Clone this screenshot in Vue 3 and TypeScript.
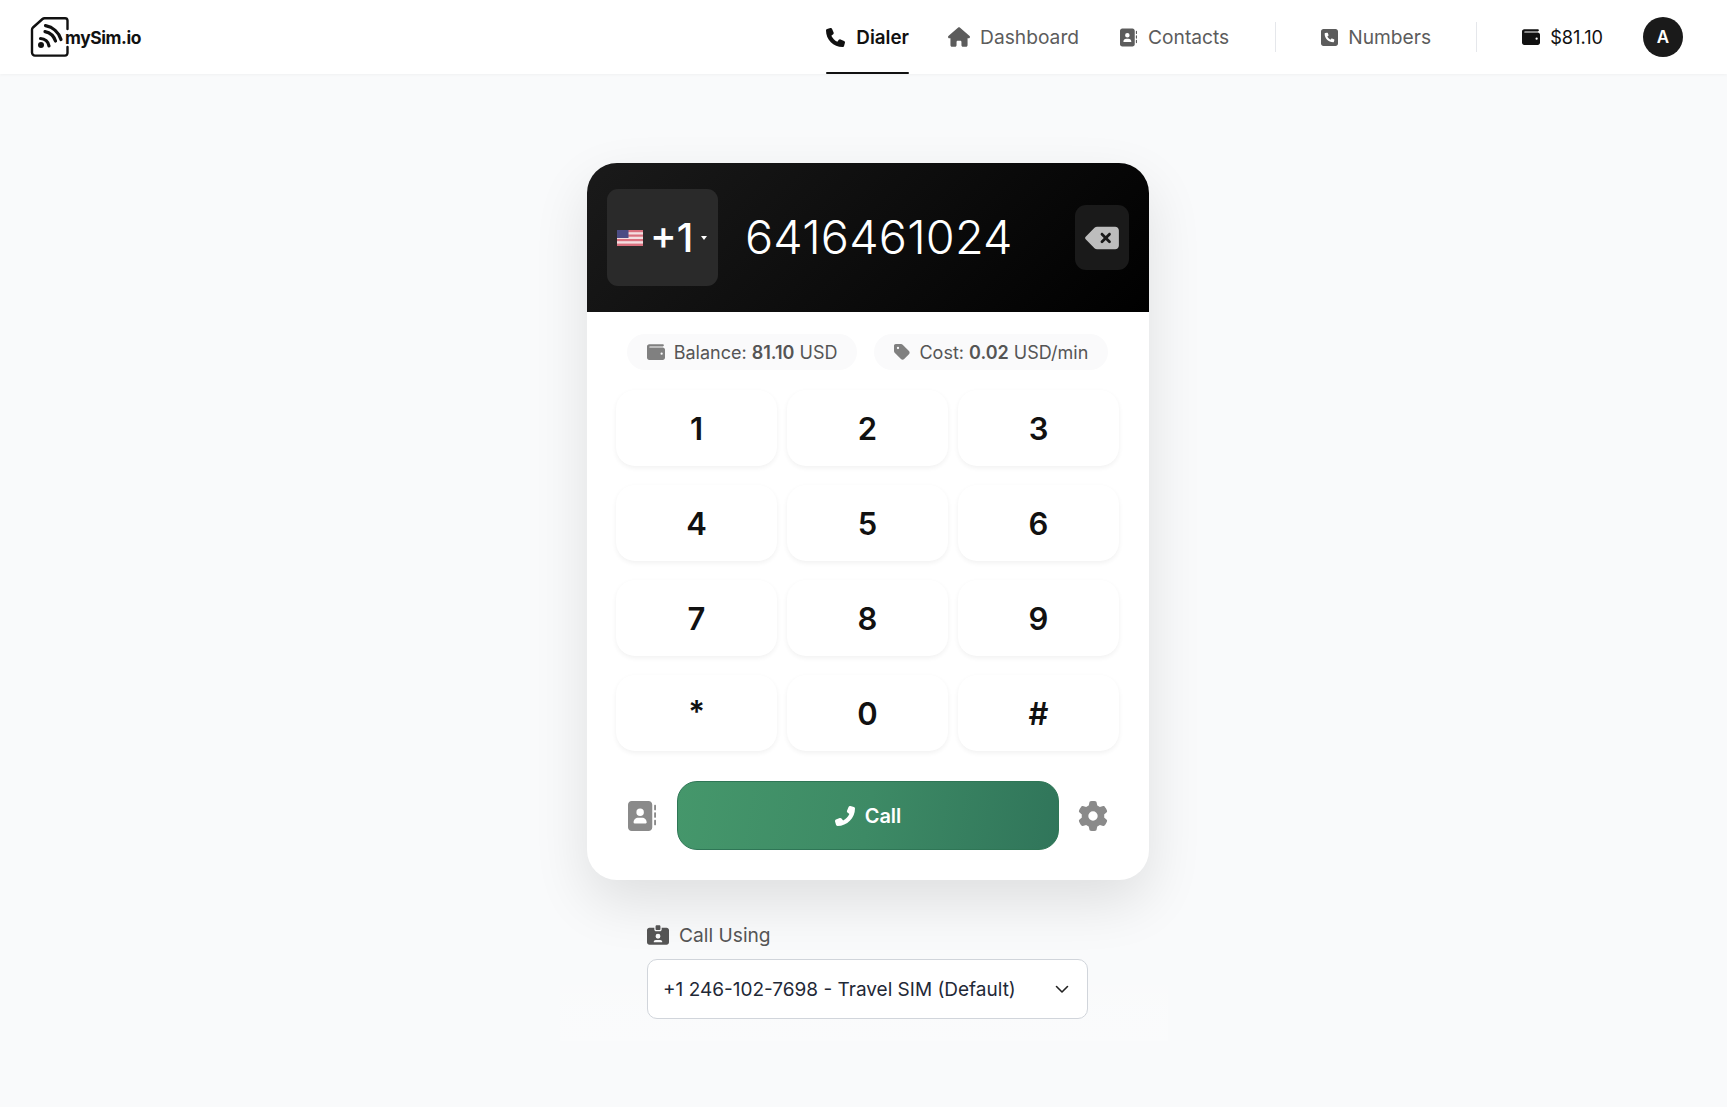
<script setup lang="ts">
const keys = ['1', '2', '3', '4', '5', '6', '7', '8', '9', '*', '0', '#']

const icons = {
  phone:
    'M164.9 24.6c-7.7-18.6-28-28.5-47.4-23.2l-88 24C12.1 30.2 0 46 0 64C0 311.4 200.6 512 448 512c18 0 33.8-12.1 38.6-29.5l24-88c5.3-19.4-4.6-39.7-23.2-47.4l-96-40c-16.3-6.8-35.2-2.1-46.3 11.6L304.7 368C234.3 334.7 177.3 277.7 144 207.3L193.3 167c13.7-11.2 18.4-30 11.6-46.3l-40-96z',
  house:
    'M575.8 255.5c0 18-15 32.1-32 32.1h-32l.7 160.2c0 2.7-.2 5.4-.5 8.1V472c0 22.1-17.9 40-40 40H456c-1.1 0-2.2 0-3.3-.1c-1.4 .1-2.8 .1-4.2 .1H416 392c-22.1 0-40-17.9-40-40V448 384c0-17.7-14.3-32-32-32H256c-17.7 0-32 14.3-32 32v64 24c0 22.1-17.9 40-40 40H160 128.1c-1.5 0-3-.1-4.5-.2c-1.2 .1-2.4 .2-3.6 .2H104c-22.1 0-40-17.9-40-40V360c0-.9 0-1.9 .1-2.8V287.6H32c-18 0-32-14-32-32.1c0-9 3-17 10-24L266.4 8c7-7 15-8 22-8s15 2 21 7L564.8 231.5c8 7 12 15 11 24z',
  book:
    'M96 0C60.7 0 32 28.7 32 64V448c0 35.3 28.7 64 64 64H384c35.3 0 64-28.7 64-64V64c0-35.3-28.7-64-64-64H96zM208 288h64c44.2 0 80 35.8 80 80c0 8.8-7.2 16-16 16H144c-8.8 0-16-7.2-16-16c0-44.2 35.8-80 80-80zm-32-96a64 64 0 1 1 128 0 64 64 0 1 1 -128 0zM512 80c0-8.8-7.2-16-16-16s-16 7.2-16 16v64c0 8.8 7.2 16 16 16s16-7.2 16-16V80zM496 192c-8.8 0-16 7.2-16 16v64c0 8.8 7.2 16 16 16s16-7.2 16-16V208c0-8.8-7.2-16-16-16zm16 144c0-8.8-7.2-16-16-16s-16 7.2-16 16v64c0 8.8 7.2 16 16 16s16-7.2 16-16V336z',
  squarePhone:
    'M64 32C28.7 32 0 60.7 0 96V416c0 35.3 28.7 64 64 64H384c35.3 0 64-28.7 64-64V96c0-35.3-28.7-64-64-64H64zm90.7 96.7c9.7-2.6 19.9 2.3 23.7 11.6l20 48c3.4 8.2 1 17.6-5.8 23.2L168 231.7c16.6 35.2 45.1 63.7 80.3 80.3l20.2-24.7c5.6-6.8 15-9.2 23.2-5.8l48 20c9.3 3.9 14.2 14 11.6 23.7l-12 44C336.9 378 329 384 320 384C196.3 384 96 283.7 96 160c0-9 6-16.9 14.7-19.3l44-12z',
  wallet:
    'M64 32C28.7 32 0 60.7 0 96V416c0 35.3 28.7 64 64 64H448c35.3 0 64-28.7 64-64V192c0-35.3-28.7-64-64-64H80c-8.8 0-16-7.2-16-16s7.2-16 16-16H448c17.7 0 32-14.3 32-32s-14.3-32-32-32H64zM416 272a32 32 0 1 1 0 64 32 32 0 1 1 0-64z',
  tag:
    'M0 80V229.5c0 17 6.7 33.3 18.7 45.3l176 176c25 25 65.5 25 90.5 0L418.7 317.3c25-25 25-65.5 0-90.5l-176-176c-12-12-28.3-18.7-45.3-18.7H48C21.5 32 0 53.5 0 80zm112 32a32 32 0 1 1 0 64 32 32 0 1 1 0-64z',
  backspace:
    'M576 128c0-35.3-28.7-64-64-64H205.3c-17 0-33.3 6.7-45.3 18.7L9.4 233.4c-6 6-9.4 14.1-9.4 22.6s3.4 16.6 9.4 22.6L160 429.3c12 12 28.3 18.7 45.3 18.7H512c35.3 0 64-28.7 64-64V128zM271 175c9.4-9.4 24.6-9.4 33.9 0l47 47 47-47c9.4-9.4 24.6-9.4 33.9 0s9.4 24.6 0 33.9l-47 47 47 47c9.4 9.4 9.4 24.6 0 33.9s-24.6 9.4-33.9 0l-47-47-47 47c-9.4 9.4-24.6 9.4-33.9 0s-9.4-24.6 0-33.9l47-47-47-47c-9.4-9.4-9.4-24.6 0-33.9z',
  gear:
    'M495.9 166.6c3.2 8.7 .5 18.4-6.4 24.6l-43.3 39.4c1.1 8.3 1.7 16.8 1.7 25.4s-.6 17.1-1.7 25.4l43.3 39.4c6.9 6.2 9.6 15.9 6.4 24.6c-4.4 11.9-9.7 23.3-15.8 34.3l-4.7 8.1c-6.6 11-14 21.4-22.1 31.2c-5.9 7.2-15.7 9.6-24.5 6.8l-55.7-17.7c-13.4 10.3-28.2 18.9-44 25.4l-12.5 57.1c-2 9.1-9 16.3-18.2 17.8c-13.8 2.3-28 3.5-42.5 3.5s-28.7-1.2-42.5-3.5c-9.2-1.5-16.2-8.7-18.2-17.8l-12.5-57.1c-15.8-6.5-30.6-15.1-44-25.4L83.1 425.9c-8.8 2.8-18.6 .3-24.5-6.8c-8.1-9.8-15.5-20.2-22.1-31.2l-4.7-8.1c-6.1-11-11.4-22.4-15.8-34.3c-3.2-8.7-.5-18.4 6.4-24.6l43.3-39.4C64.6 273.1 64 264.6 64 256s.6-17.1 1.7-25.4L22.4 191.2c-6.9-6.2-9.6-15.9-6.4-24.6c4.4-11.9 9.7-23.3 15.8-34.3l4.7-8.1c6.6-11 14-21.4 22.1-31.2c5.9-7.2 15.7-9.6 24.5-6.8l55.7 17.7c13.4-10.3 28.2-18.9 44-25.4l12.5-57.1c2-9.1 9-16.3 18.2-17.8C227.3 1.2 241.5 0 256 0s28.7 1.2 42.5 3.5c9.2 1.5 16.2 8.7 18.2 17.8l12.5 57.1c15.8 6.5 30.6 15.1 44 25.4l55.7-17.7c8.8-2.8 18.6-.3 24.5 6.8c8.1 9.8 15.5 20.2 22.1 31.2l4.7 8.1c6.1 11 11.4 22.4 15.8 34.3zM256 336a80 80 0 1 0 0-160 80 80 0 1 0 0 160z',
  idClip:
    'M256 0h64c17.7 0 32 14.3 32 32V96c0 17.7-14.3 32-32 32H256c-17.7 0-32-14.3-32-32V32c0-17.7 14.3-32 32-32zM64 64H192v48c0 26.5 21.5 48 48 48h96c26.5 0 48-21.5 48-48V64H512c35.3 0 64 28.7 64 64V448c0 35.3-28.7 64-64 64H64c-35.3 0-64-28.7-64-64V128C0 92.7 28.7 64 64 64zM176 437.3c0 5.9 4.8 10.7 10.7 10.7H389.3c5.9 0 10.7-4.8 10.7-10.7c0-29.5-23.9-53.3-53.3-53.3H229.3c-29.5 0-53.3 23.9-53.3 53.3zM288 352a64 64 0 1 0 0-128 64 64 0 1 0 0 128z',
}

const navItems = [
  { label: 'Dialer', icon: icons.phone, box: '0 0 512 512', cls: 'ic-phone', active: true },
  { label: 'Dashboard', icon: icons.house, box: '0 0 576 512', cls: 'ic-house', active: false },
  { label: 'Contacts', icon: icons.book, box: '32 0 480 512', cls: 'ic-book', active: false },
]
</script>

<template>
  <div class="page">
    <header class="topbar">
      <a class="logo">
        <svg class="logo-mark" viewBox="0 0 40 40" fill="none" stroke="#111" stroke-width="2.4" stroke-linecap="round" stroke-linejoin="round">
          <path d="M37.5 12V3.5A2.5 2.5 0 0 0 35 1.2H14.5A3 3 0 0 0 12.5 2L3 10.5A3 3 0 0 0 2 12.7V35.5A3 3 0 0 0 5 38.6H35A2.5 2.5 0 0 0 37.5 36V30" />
          <circle cx="11" cy="28" r="3" fill="#111" stroke="none" />
          <path d="M10.5 21.5A8.5 8.5 0 0 1 19 29" stroke-width="3.2" />
          <path d="M15 14.6A14 14 0 0 1 25.5 24" stroke-width="3.2" />
          <path d="M15.5 8.6A20 20 0 0 1 31 22.5" stroke-width="3.2" />
        </svg>
        <span class="logo-text">mySim.io</span>
      </a>

      <nav class="nav">
        <a v-for="item in navItems" :key="item.label" class="nav-link" :class="{ active: item.active }">
          <svg :class="item.cls" :viewBox="item.box"><path :d="item.icon" /></svg>
          <span>{{ item.label }}</span>
        </a>
        <span class="divider"></span>
        <a class="nav-link numbers">
          <svg class="ic-book" viewBox="0 32 448 448"><path :d="icons.squarePhone" /></svg>
          <span>Numbers</span>
        </a>
        <span class="divider"></span>
        <a class="nav-link wallet">
          <svg class="ic-wallet" viewBox="0 32 512 448"><path :d="icons.wallet" /></svg>
          <span>$81.10</span>
        </a>
        <span class="avatar">A</span>
      </nav>
    </header>

    <main class="main">
      <section class="dialer">
        <div class="display">
          <button class="country">
            <svg class="flag" viewBox="0 0 26 16">
              <rect width="26" height="16" fill="#f3dfe1" />
              <rect y="0" width="26" height="2.2" fill="#d9707e" />
              <rect y="4.5" width="26" height="2.2" fill="#d9707e" />
              <rect y="9" width="26" height="2.2" fill="#d9707e" />
              <rect y="13.6" width="26" height="2.4" fill="#d9707e" />
              <rect width="11.5" height="8" fill="#4b4c84" />
            </svg>
            <span class="code">+1</span>
            <span class="caret"></span>
          </button>
          <div class="number">6416461024</div>
          <button class="erase">
            <svg viewBox="0 0 576 512"><path :d="icons.backspace" /></svg>
          </button>
        </div>

        <div class="body">
          <div class="pills">
            <div class="pill">
              <svg class="pill-wallet" viewBox="0 32 512 448"><path :d="icons.wallet" /></svg>
              <span>Balance: <b>81.10</b> USD</span>
            </div>
            <div class="pill">
              <svg class="pill-tag" viewBox="0 32 448 448"><path :d="icons.tag" /></svg>
              <span>Cost: <b>0.02</b> USD/min</span>
            </div>
          </div>

          <div class="keypad">
            <button v-for="key in keys" :key="key" class="key" :class="{ star: key === '*' }">{{ key }}</button>
          </div>

          <div class="actions">
            <button class="side-btn">
              <svg class="side-book" viewBox="32 0 480 512"><path :d="icons.book" /></svg>
            </button>
            <button class="call">
              <svg class="call-icon" viewBox="0 0 512 512"><path :d="icons.phone" /></svg>
              <span>Call</span>
            </button>
            <button class="side-btn">
              <svg class="side-gear" viewBox="0 0 512 512"><path :d="icons.gear" /></svg>
            </button>
          </div>
        </div>
      </section>

      <section class="caller-wrap">
        <div class="caller">
          <label class="caller-label">
            <svg viewBox="0 0 576 512"><path :d="icons.idClip" /></svg>
            <span>Call Using</span>
          </label>
          <div class="select">
            <span>+1 246-102-7698 - Travel SIM (Default)</span>
            <svg viewBox="0 0 16 16" fill="none" stroke="#222" stroke-width="1.6" stroke-linecap="round" stroke-linejoin="round"><path d="M2.5 5.5 8 11l5.5-5.5" /></svg>
          </div>
        </div>
      </section>
    </main>
  </div>
</template>

<style>
html,
body {
  margin: 0;
  background: #f8f9fa;
}
</style>

<style scoped>
.page {
  min-height: 1107px;
  background: #f9fafb;
  font-family: Inter, 'Liberation Sans', sans-serif;
  color: #111;
}

.topbar {
  height: 74px;
  box-sizing: border-box;
  padding: 0 44px 0 30px;
  display: flex;
  align-items: center;
  justify-content: space-between;
  background: #fff;
  box-shadow: 0 1px 3px rgba(0, 0, 0, 0.04);
}

.logo {
  display: flex;
  align-items: center;
}

.logo-mark {
  width: 40px;
  height: 40px;
  flex: none;
}

.logo-text {
  margin-left: -5px;
  padding-top: 1px;
  font-size: 17.4px;
  font-weight: 700;
  letter-spacing: -0.4px;
}

.nav {
  display: flex;
  align-items: center;
  height: 100%;
}

.nav-link {
  position: relative;
  height: 100%;
  display: flex;
  align-items: center;
  gap: 11px;
  margin-right: 41px;
  color: #5c5c5c;
  fill: #5c5c5c;
  font-size: 19.2px;
}

.nav-link svg {
  flex: none;
}

.nav-link.active {
  margin-right: 39px;
  color: #111;
  fill: #111;
  font-size: 18.8px;
  font-weight: 600;
}

.nav-link.active::after {
  content: '';
  position: absolute;
  left: 0;
  right: 0;
  bottom: 0;
  height: 2px;
  background: #111;
  border-radius: 1px;
}

.nav-link.numbers {
  gap: 10px;
  margin-right: 39px;
}

.ic-phone {
  width: 19px;
  height: 19px;
}

.ic-house {
  width: 22px;
  height: 20px;
  margin-right: -1px;
}

.ic-book {
  width: 17px;
  height: 19px;
}

.ic-wallet {
  width: 18px;
  height: 16px;
}

.divider {
  width: 1px;
  height: 30px;
  background: #e5e7eb;
  margin: 0 45px 0 5px;
}

.nav-link.wallet {
  gap: 10px;
  margin-right: 40px;
  color: #111;
  fill: #111;
  font-size: 18.2px;
}

.numbers + .divider {
  margin-left: 6px;
}

.avatar {
  width: 40px;
  height: 40px;
  border-radius: 50%;
  background: #1a1a1a;
  color: #fff;
  font-size: 17px;
  font-weight: 600;
  display: flex;
  align-items: center;
  justify-content: center;
}

.main {
  display: flex;
  flex-direction: column;
  align-items: center;
  padding: 89px 0 0 9px;
}

.dialer {
  position: relative;
  z-index: 1;
  width: 562px;
  height: 717px;
  background: #fff;
  border-radius: 30px;
  overflow: hidden;
  box-shadow: 0 22px 55px rgba(0, 0, 0, 0.11);
}

.display {
  height: 149px;
  box-sizing: border-box;
  padding: 0 20px;
  display: flex;
  align-items: center;
  background: linear-gradient(135deg, #1a1a1a 0%, #000 100%);
}

button {
  border: none;
  padding: 0;
  font-family: inherit;
  background: none;
}

.country {
  width: 111px;
  height: 97px;
  flex: none;
  box-sizing: border-box;
  padding-left: 10px;
  display: flex;
  align-items: center;
  border-radius: 11px;
  background: #2a2a2a;
  color: #fff;
}

.flag {
  width: 26px;
  height: 16px;
  flex: none;
}

.code {
  margin-left: 7px;
  font-size: 40px;
  font-weight: 500;
  line-height: 1;
}

.caret {
  margin-left: 8px;
  border-left: 3.5px solid transparent;
  border-right: 3.5px solid transparent;
  border-top: 4px solid #fff;
}

.number {
  flex: 1;
  margin-left: 27px;
  color: #fff;
  font-size: 46.8px;
  font-weight: 300;
  letter-spacing: 0.2px;
  line-height: 1;
}

.erase {
  width: 54px;
  height: 65px;
  flex: none;
  display: flex;
  align-items: center;
  justify-content: center;
  border-radius: 11px;
  background: #1a1a1a;
  fill: #bdbdbd;
}

.erase svg {
  width: 34px;
  height: 30px;
}

.body {
  padding: 22px 30px 0 29px;
}

.pills {
  display: flex;
  justify-content: center;
  gap: 17px;
}

.pill {
  height: 36px;
  box-sizing: border-box;
  padding: 0 20px;
  display: flex;
  align-items: center;
  gap: 9px;
  border-radius: 18px;
  background: #fafafb;
  color: #555;
  fill: #808080;
  font-size: 18px;
}

.pill b {
  font-weight: 600;
}

.pill-wallet {
  width: 18px;
  height: 16px;
}

.pill-tag {
  width: 16px;
  height: 16px;
}

.keypad {
  margin-top: 20px;
  display: grid;
  grid-template-columns: repeat(3, 161px);
  grid-auto-rows: 76px;
  column-gap: 10px;
  row-gap: 19px;
}

.key {
  border-radius: 19px;
  background: #fff;
  color: #111;
  font-size: 31px;
  font-weight: 600;
  box-shadow: 0 2px 5px rgba(0, 0, 0, 0.06);
}

.key.star {
  padding-bottom: 3px;
}

.actions {
  margin-top: 30px;
  display: grid;
  grid-template-columns: 61px 382px 60px;
  align-items: center;
}

.side-btn {
  display: flex;
  align-items: center;
  fill: #8a8a8a;
}

.side-book {
  margin-left: 12px;
  width: 28px;
  height: 30px;
}

.side-gear {
  margin-left: 19px;
  width: 30px;
  height: 30px;
}

.call {
  height: 69px;
  box-sizing: border-box;
  display: flex;
  align-items: center;
  justify-content: center;
  gap: 10px;
  border: 1px solid #2f7656;
  border-radius: 20px;
  background: linear-gradient(100deg, #45976b 0%, #3d8a65 50%, #30755a 100%);
  color: #fff;
  fill: #fff;
  font-size: 20px;
  font-weight: 600;
}

.call-icon {
  width: 20px;
  height: 20px;
  transform: scaleX(-1);
}

.caller-wrap {
  width: 608px;
  box-sizing: border-box;
  margin-right: 9px;
  padding: 43px 0 22px 8px;
  display: flex;
  justify-content: center;
  background: linear-gradient(to bottom, rgba(255, 255, 255, 0) 40%, rgba(255, 255, 255, 0.2) 100%);
}

.caller {
  width: 441px;
}

.caller-label {
  display: flex;
  align-items: center;
  gap: 10px;
  color: #555;
  font-size: 19.2px;
  fill: #555;
}

.caller-label svg {
  width: 22px;
  height: 20px;
}

.select {
  margin-top: 12px;
  height: 60px;
  box-sizing: border-box;
  padding: 0 17px 0 15px;
  display: flex;
  align-items: center;
  justify-content: space-between;
  border: 1px solid #d1d5db;
  border-radius: 10px;
  background: #fff;
  color: #1f2937;
  font-size: 19px;
}

.select svg {
  width: 16px;
  height: 16px;
}
</style>
